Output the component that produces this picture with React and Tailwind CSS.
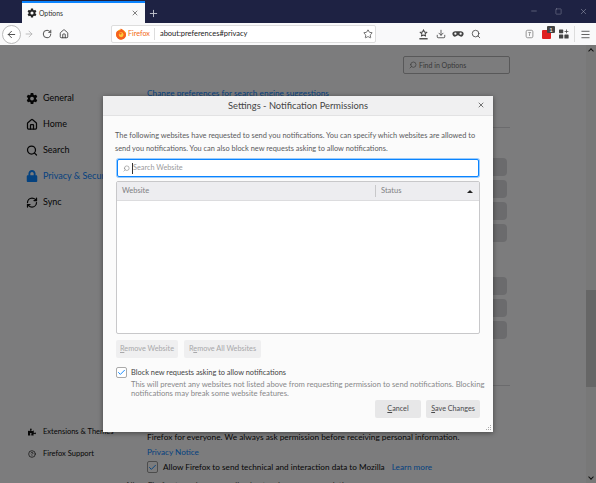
import React from "react";
import { ArrowLeft, ArrowRight, RotateCw, Home, Star, Download, Search, X, Plus, Minus, Square, Menu, RefreshCw, CircleHelp, Check } from "lucide-react";
import { FaLock, FaPuzzlePiece } from "react-icons/fa";
import { IoSettingsSharp } from "react-icons/io5";

const Ff = () => (
  <svg width="12" height="12" viewBox="0 0 16 16">
    <circle cx="8" cy="8.6" r="6.6" fill="#ff9500" />
    <path d="M3 3.5C2 5 1.2 7 1.5 9.5c.6 3.6 3.4 6 6.6 6 3.6 0 6.5-2.900 6.500-6.500 0-1.500-.5-3.200-1.600-4.500.2 1.200 0 2-.5 2.500C12 4 10 2 7.500.8c.4 1.700-.6 2.900-1.500 3.500C5 4 4.200 4 3.500 4.600z" fill="#f5601f" />
    <circle cx="8.200" cy="9" r="3.200" fill="#ffc83a" />
    <path d="M5.200 7.500c1.200-1.200 3.400-1 4.400.2-1 0-1.400.5-1.400 1-1 0-1.800-.4-3-1.200z" fill="#f5601f" />
  </svg>
);

const Tray = () => (
  <svg width="11" height="11" viewBox="0 0 16 16" fill="none" stroke="#444" strokeWidth="1.500">
    <path d="M8 1.500l1.500 3 3 .4-2.200 2.100.5 3L8 8.700 5.200 10l.5-3-2.200-2.100 3-.4z" />
    <path d="M2 14.200h12" strokeWidth="2" />
  </svg>
);

const Mask = () => (
  <svg width="12" height="12" viewBox="0 0 16 16" fill="#444">
    <path d="M4.300 4.200h7.400c2.200 0 3.800 1.400 3.800 3.400S14 11.500 12 11.500c-1.800 0-2.600-1.700-4-1.700s-2.200 1.700-4 1.700c-2 0-3.500-1.800-3.500-3.900s1.600-3.400 3.800-3.400z" />
    <circle cx="4.500" cy="7.600" r="1.500" fill="#f9f9fa" />
    <circle cx="11.500" cy="7.600" r="1.500" fill="#f9f9fa" />
  </svg>
);

const Pocketish = () => (
  <svg width="9" height="10" viewBox="0 0 12 13" fill="none" stroke="#777" strokeWidth="1">
    <rect x="1.500" y="1.500" width="9" height="10" rx="2" />
    <path d="M4.500 4.500h3L6 6.200V9" />
  </svg>
);

const Apps = () => (
  <svg width="10" height="10" viewBox="0 0 13 12" fill="#444">
    <rect x="0" y="0" width="5.500" height="5" rx=".8" />
    <rect x="0" y="6.500" width="5.500" height="5.500" rx=".8" />
    <rect x="7" y="6.500" width="5.500" height="5.500" rx=".8" />
    <path d="M9.200 0h1v2h2v1h-2v2h-1V3h-2V2h2z" />
  </svg>
);

const NavItem = ({ icon, label, active }) => (
  <div className={`flex items-center h-[26px] gap-[5px] text-[9px] ${active ? "text-[#0a84ff]" : "text-[#0c0c0d]"}`}>
    <span className="w-[12px] h-[14px] flex items-center justify-center">{icon}</span>
    <span className="whitespace-nowrap">{label}</span>
  </div>
);

const BgButton = () => <div className="w-[14px] h-[18px] ml-auto mr-[3px] bg-[#d7d7db] rounded-r-sm" />;

const U = ({ children }) => <span className="underline underline-offset-1">{children}</span>;

export default function App() {
  return (
    <div className="relative w-[596px] h-[483px] overflow-hidden flex flex-col bg-[#f9f9fa] text-[#0c0c0d] font-['Lato','Noto_Sans',sans-serif]">
      {/* title bar */}
      <div className="h-[23px] shrink-0 bg-[#1e2243] flex items-end pl-[22px]">
        <div className="w-[123px] h-[22px] bg-[#f9f9fa] border-t-2 border-[#0a84ff] flex items-center pl-[5px] pr-[6px] gap-[2px] text-[#333]">
          <IoSettingsSharp size={10} color="#222" />
          <span className="text-[6.800px] flex-1 whitespace-nowrap">Options</span>
          <X size={8} strokeWidth={2} color="#444" />
        </div>
        <Plus size={11} strokeWidth={2} color="#c4c6d0" className="ml-[3px] mb-[4px]" />
        <div className="ml-auto flex h-full items-center text-[#b4b6c4] gap-[17px] pr-[8px] pb-[1px]">
          <Minus size={8} strokeWidth={1.200} />
          <Square size={7} strokeWidth={1.200} />
          <X size={9} strokeWidth={1.200} />
        </div>
      </div>
      {/* toolbar */}
      <div className="h-[22px] shrink-0 bg-[#f9f9fa] flex items-center pl-[2px] text-[#444]">
        <div className="w-[19px] h-[19px] rounded-full border border-[#bbb] bg-white flex items-center justify-center">
          <ArrowLeft size={11} strokeWidth={2} color="#444" />
        </div>
        <ArrowRight size={10} strokeWidth={1.800} color="#aaa" className="ml-[3px]" />
        <RotateCw size={10} strokeWidth={2} color="#333" className="ml-[8px]" />
        <Home size={10} strokeWidth={2} color="#333" className="ml-[7px]" />
        <div className="ml-[42px] w-[265px] h-[18px] border border-[#ddd] bg-white rounded-[2px] flex items-center pl-[3px] pr-[2px]">
          <Ff />
          <span className="text-[7.200px] text-[#f26a16] ml-[1px] whitespace-nowrap">Firefox</span>
          <span className="w-px h-[12px] bg-[#ddd] ml-[4px]" />
          <span className="text-[7.500px] ml-[5px] whitespace-nowrap text-[#222]">about:preferences#privacy</span>
          <Star size={10} strokeWidth={1.800} className="ml-auto" />
        </div>
        <div className="ml-[42px]"><Tray /></div>
        <Download size={10} strokeWidth={2} className="ml-[7px]" />
        <div className="ml-[6px]"><Mask /></div>
        <Search size={10} strokeWidth={2} className="ml-[7px]" />
        <div className="ml-[44px]"><Pocketish /></div>
        <div className="relative ml-[8px] w-[9px] h-[9px] bg-[#e02020] rounded-[1px]">
          <span className="absolute -top-[4px] left-[5px] w-[8px] h-[7px] rounded-[1px] bg-[#444] text-white text-[6px] leading-[7px] text-center">1</span>
        </div>
        <div className="ml-[8px]"><Apps /></div>
        <div className="w-px h-[16px] bg-[#ddd] ml-[5px]" />
        <Menu size={11} strokeWidth={1.800} className="ml-[5px]" />
      </div>
      {/* page */}
      <div className="relative flex-1 flex min-h-0 text-[#0c0c0d]">
        {/* sidebar */}
        <div className="w-[147px] shrink-0 flex flex-col pl-[26px] pt-[40px] pb-[23px]">
          <NavItem label="General" icon={<IoSettingsSharp size={13} />} />
          <NavItem label="Home" icon={<Home size={13} strokeWidth={2.500} />} />
          <NavItem label="Search" icon={<Search size={13} strokeWidth={2.500} />} />
          <NavItem active label="Privacy & Security" icon={<FaLock size={12} />} />
          <NavItem label="Sync" icon={<RefreshCw size={13} strokeWidth={2.500} />} />
          <div className="mt-auto flex flex-col text-[7.500px] gap-[10px] pl-[2px]">
            <div className="flex items-center gap-[7px] h-[12px]"><FaPuzzlePiece size={8} /><span className="whitespace-nowrap">Extensions & Themes</span></div>
            <div className="flex items-center gap-[7px] h-[12px]"><CircleHelp size={8} strokeWidth={2} /><span className="whitespace-nowrap">Firefox Support</span></div>
          </div>
        </div>
        {/* content */}
        <div className="flex-1 min-w-0 flex flex-col *:shrink-0 pr-[86px] pt-[11px] text-[8.300px]">
          <div className="ml-auto w-[107px] h-[18px] border border-[#b1b1b3] rounded-[2px] flex items-center pl-[5px] gap-[2px] text-[7px] text-[#737373]">
            <Search size={8} strokeWidth={2} className="-scale-x-100" />
            <span>Find in Options</span>
          </div>
          <div className="text-[#0a84ff] underline mt-[14px] leading-[11px] text-[8.300px] whitespace-nowrap">Change preferences for search engine suggestions</div>
          <div className="h-px bg-[#d7d7db] mt-[28px]" />
          <div className="mt-[30px] flex flex-col gap-[4px]">
            <BgButton /><BgButton /><BgButton /><BgButton />
          </div>
          <div className="mt-[35px] flex flex-col gap-[4px]">
            <BgButton /><BgButton /><BgButton />
          </div>
          <div className="h-px bg-[#d7d7db] mt-[46px]" />
          <div className="mt-[44px] leading-[14px] whitespace-nowrap">Firefox for everyone. We always ask permission before receiving personal information.</div>
          <div className="text-[#0a84ff] text-[8.200px] leading-[14px] mt-[1px] whitespace-nowrap">Privacy Notice</div>
          <div className="flex items-center mt-[2px] gap-[5px] whitespace-nowrap text-[8.200px]">
            <span className="w-[11px] h-[12px] border border-[#999] rounded-[2px] flex items-center justify-center"><Check size={9} strokeWidth={2.500} color="#0a84ff" /></span>
            Allow Firefox to send technical and interaction data to Mozilla
            <span className="text-[#0a84ff] ml-[2px]">Learn more</span>
          </div>
          <div className="mt-[6px] -ml-[22px] whitespace-nowrap text-[#555]">Allow Firefox to make personalized extension recommendations</div>
        </div>
        {/* scrollbar */}
        <div className="w-[10px] shrink-0 absolute right-0 top-0 bottom-0 bg-[#f0f0f0] flex flex-col items-center py-[2px]">
          <span className="w-[4px] h-[4px] border-l border-t border-[#222] rotate-45 mt-[2px]" />
          <div className="w-full h-[97px] bg-[#cdcdcd] mt-[237px]" />
          <span className="w-[4px] h-[4px] border-r border-b border-[#222] rotate-45 mt-auto mb-[2px]" />
        </div>
        {/* scrim */}
        <div className="absolute inset-0 bg-black/50" />
        {/* dialog */}
        <div className="absolute left-[103px] top-[51px] w-[390px] h-[336px] bg-[#fbfbfb] shadow-[0_1px_5px_rgba(0,0,0,0.45)] flex flex-col text-[#5a5a5c]">
          <div className="h-[20px] shrink-0 bg-[#f0f0f1] border-b border-[#e2e2e3] flex items-center justify-center relative text-[9.300px] text-[#444]">
            Settings - Notification Permissions
            <X size={8} strokeWidth={2} color="#333" className="absolute right-[8px] top-[5px]" />
          </div>
          <div className="flex-1 flex flex-col pl-[13px] pr-[13px]">
            <p className="text-[7.400px] leading-[13px] mt-[13px] ml-[-1px] whitespace-nowrap">
              The following websites have requested to send you notifications. You can specify which websites are allowed to<br />
              send you notifications. You can also block new requests asking to allow notifications.
            </p>
            <div className="mt-[4px] ml-[1px] mr-[1px] h-[18px] border border-[#0a84ff] rounded-[2px] shadow-[0_0_0_1px_rgba(10,132,255,0.4)] bg-white flex items-center pl-[5px] text-[7.300px] text-[#9a9a9c]">
              <Search size={7} strokeWidth={1.800} color="#777" className="-scale-x-100 mr-[2px]" />
              <span className="w-px h-[11px] bg-[#333]" />
              <span>Search Website</span>
            </div>
            <div className="mt-[4px] h-[153px] border border-[#c8c8ca] rounded-[2px] bg-white flex flex-col">
              <div className="h-[19px] bg-[#ededf0] border-b border-[#dcdcde] flex items-center text-[7.500px] text-[#808083]">
                <span className="pl-[5px] w-[258px]">Website</span>
                <span className="w-px h-[12px] bg-[#c8c8ca]" />
                <span className="pl-[5px] flex-1">Status</span>
                <span className="w-0 h-0 border-x-[3px] border-x-transparent border-b-[3px] border-b-[#222] mr-[6px]" />
              </div>
            </div>
            <div className="mt-[6px] flex gap-[6px] text-[7.300px] text-[#a8a8aa]">
              <span className="w-[62px] h-[18px] bg-[#efeff0] rounded-[2px] flex items-center justify-center whitespace-nowrap"><span><U>R</U>emove Website</span></span>
              <span className="w-[77px] h-[18px] bg-[#efeff0] rounded-[2px] flex items-center justify-center whitespace-nowrap"><span>R<U>e</U>move All Websites</span></span>
            </div>
            <div className="mt-[9px] flex items-center gap-[4px] text-[7.400px] text-[#444]">
              <span className="w-[11px] h-[11px] border border-[#aaa] rounded-[2px] bg-white flex items-center justify-center"><Check size={9} strokeWidth={2.500} color="#0a84ff" /></span>
              <span className="whitespace-nowrap">Block new requests asking to allow notifications</span>
            </div>
            <p className="ml-[15px] mt-[2px] text-[7.700px] leading-[9px] text-[#88888a] whitespace-nowrap">
              This will prevent any websites not listed above from requesting permission to send notifications. Blocking<br />
              notifications may break some website features.
            </p>
            <div className="mt-[2px] flex justify-end gap-[5px] text-[7.200px] text-[#4a4a4c]">
              <span className="w-[46px] h-[18px] bg-[#e7e7e8] rounded-[2px] flex items-center justify-center"><span><U>C</U>ancel</span></span>
              <span className="w-[54px] h-[18px] bg-[#e7e7e8] rounded-[2px] flex items-center justify-center whitespace-nowrap"><span><U>S</U>ave Changes</span></span>
            </div>
          </div>
          <svg className="absolute right-[1px] bottom-[1px]" width="6" height="6" viewBox="0 0 6 6" fill="#aaa">
            <rect x="4" y="0" width="1" height="1" /><rect x="2" y="2" width="1" height="1" /><rect x="4" y="2" width="1" height="1" /><rect x="0" y="4" width="1" height="1" /><rect x="2" y="4" width="1" height="1" /><rect x="4" y="4" width="1" height="1" />
          </svg>
        </div>
      </div>
    </div>
  );
}
